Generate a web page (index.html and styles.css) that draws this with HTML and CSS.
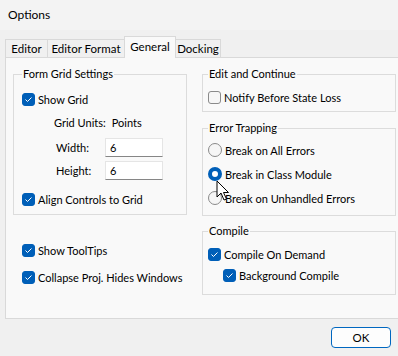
FILE: index.html
```html
<!DOCTYPE html>
<html lang="en">
<head>
    <meta charset="UTF-8">
    <title>Options</title>
    <link rel="stylesheet" href="styles.css">
</head>
<body>
    <div class="titulo">Options</div>

    <div class="pestanas">
        <div class="pestana p-editor">Editor</div>
        <div class="pestana p-formato">Editor Format</div>
        <div class="pestana p-general activa">General</div>
        <div class="pestana p-docking">Docking</div>
    </div>

    <div class="panel">
        <div class="columna izquierda">
            <fieldset class="grupo grid">
                <legend>Form Grid Settings</legend>
                <label class="opcion primera"><span class="caja marcada"></span>Show Grid</label>
                <div class="unidades"><span>Grid Units:</span><span>Points</span></div>
                <div class="campo"><span>Width:</span><input type="text" value="6"></div>
                <div class="campo"><span>Height:</span><input type="text" value="6"></div>
                <label class="opcion alinear"><span class="caja marcada"></span>Align Controls to Grid</label>
            </fieldset>

            <label class="opcion suelta tooltips"><span class="caja marcada"></span>Show ToolTips</label>
            <label class="opcion suelta colapsar"><span class="caja marcada"></span>Collapse Proj. Hides Windows</label>
        </div>

        <div class="columna derecha">
            <fieldset class="grupo editar">
                <legend>Edit and Continue</legend>
                <label class="opcion primera"><span class="caja"></span>Notify Before State Loss</label>
            </fieldset>

            <fieldset class="grupo errores">
                <legend>Error Trapping</legend>
                <label class="opcion primera"><span class="radio"></span>Break on All Errors</label>
                <label class="opcion"><span class="radio elegido"></span>Break in Class Module</label>
                <label class="opcion"><span class="radio"></span>Break on Unhandled Errors</label>
            </fieldset>

            <fieldset class="grupo compilar">
                <legend>Compile</legend>
                <label class="opcion primera"><span class="caja marcada"></span>Compile On Demand</label>
                <label class="opcion sangria"><span class="caja marcada"></span>Background Compile</label>
            </fieldset>
        </div>
    </div>

    <div class="pie">
        <button class="boton">OK</button>
    </div>

    <!-- puntero del raton encima del radio -->
    <svg class="puntero" width="14" height="22" viewBox="0 0 14 22">
        <path d="M1 1 L1 17 L5 13 L8 20 L10.5 19 L7.5 12.5 L12.5 12.5 Z" fill="#fff" stroke="#000" stroke-width="1" stroke-linejoin="round"/>
    </svg>
</body>
</html>
```

FILE: styles.css
```css
body {
    margin: 0;
    width: 398px;
    height: 356px;
    overflow: hidden;
    position: relative;
    background-color: #f0f0f0;
    font-family: 'Segoe UI', Lato, sans-serif;
    font-size: 11px;
    color: #000;
    white-space: nowrap;
}

.titulo {
    height: 30px;
    line-height: 30px;
    padding-left: 8px;
    font-size: 12px;
    background-color: #f3f3f3;
}

/* Pestañas */
.pestanas {
    display: flex;
    align-items: flex-end;
    height: 20px;
    margin-top: 7px;
    padding-left: 5px;
}

.pestana {
    height: 17px;
    line-height: 17px;
    margin-right: -1px;
    box-sizing: content-box;
    border: 1px solid #d9d9d9;
    border-bottom: none;
    text-align: center;
    font-size: 11.5px;
    background-color: #f0f0f0;
}

.p-editor { width: 41px; }
.p-formato { width: 76px; }
.p-general { width: 50px; }
.p-docking { width: 44px; }

.pestana.activa {
    position: relative;
    z-index: 1;
    height: 21px;
    line-height: 19px;
    margin-bottom: -1px;
    background-color: #f9f9f9;
}

/* Panel */
.panel {
    display: flex;
    gap: 15px;
    width: 400px;
    height: 262px;
    margin-left: 5px;
    padding: 8px 0 0 7px;
    box-sizing: border-box;
    border: 1px solid #d9d9d9;
    background-color: #f9f9f9;
}

.columna {
    display: flex;
    flex-direction: column;
}

.izquierda {
    width: 174px;
}

.derecha {
    width: 194px;
}

.grupo {
    margin: 0;
    padding: 0 5px;
    border: 1px solid #dcdcdc;
    min-width: 0;
}

.grupo legend {
    padding: 0 1px;
    margin-left: 0;
    line-height: 16px;
}

.grid {
    padding: 0 8px 7px;
}

.grid legend {
    margin-left: 0;
}

.errores {
    margin-top: 8px;
    padding-bottom: 9px;
}

.editar {
    padding-bottom: 6px;
}

.compilar {
    margin-top: 7px;
    padding-bottom: 11px;
}

.opcion {
    display: flex;
    align-items: center;
    gap: 3px;
    height: 16px;
    margin-top: 8px;
}

.opcion.primera {
    margin-top: 9px;
}

.editar .opcion.primera {
    margin-top: 7px;
}

.errores .opcion.primera {
    margin-top: 6px;
}

.compilar .opcion.primera {
    margin-top: 7px;
}

.compilar .sangria {
    margin-top: 5px;
    margin-left: 15px;
}

.alinear {
    margin-top: 11px;
}

.suelta {
    margin-left: 9px;
}

.tooltips {
    margin-top: 27px;
}

.colapsar {
    margin-top: 11px;
}

/* Casillas y radios */
.caja {
    width: 13px;
    height: 13px;
    flex: none;
    box-sizing: border-box;
    border: 1px solid #8a8a8a;
    border-radius: 3px;
    background-color: #f6f6f6;
}

.caja.marcada {
    border-color: #005fb8;
    background: #005fb8 url("data:image/svg+xml,%3Csvg xmlns='http://www.w3.org/2000/svg' width='11' height='11'%3E%3Cpath d='M2.5 5.5 L4.5 7.5 L8.5 3.5' fill='none' stroke='%23ffffff' stroke-width='1'/%3E%3C/svg%3E") center no-repeat;
}

.radio {
    width: 14px;
    height: 14px;
    flex: none;
    box-sizing: border-box;
    border: 1px solid #8a8a8a;
    border-radius: 50%;
    background-color: #f6f6f6;
}

.radio.elegido {
    border: 4px solid #005fb8;
    background-color: #fff;
}

/* Campos de la rejilla */
.unidades {
    display: flex;
    gap: 6px;
    height: 16px;
    line-height: 16px;
    margin: 8px 0 0 32px;
}

.campo {
    display: flex;
    align-items: center;
    height: 19px;
    margin: 7px 0 0 34px;
}

.campo + .campo {
    margin-top: 4px;
}

.campo span {
    width: 49px;
}

.campo input {
    width: 58px;
    height: 19px;
    box-sizing: border-box;
    margin: 0;
    padding: 0 4px;
    border: 1px solid #e5e5e5;
    border-bottom-color: #868686;
    background-color: #fff;
    font-family: inherit;
    font-size: 11px;
    color: #000;
    outline: none;
}

/* Boton */
.pie {
    display: flex;
    justify-content: flex-end;
    padding: 8px 7px 0 0;
}

.boton {
    width: 60px;
    height: 21px;
    padding: 0;
    border: 1px solid #0067c0;
    border-radius: 4px;
    background-color: #fdfdfd;
    font-family: inherit;
    font-size: 11.5px;
    color: #000;
}

.puntero {
    position: absolute;
    left: 216px;
    top: 180px;
}
```
